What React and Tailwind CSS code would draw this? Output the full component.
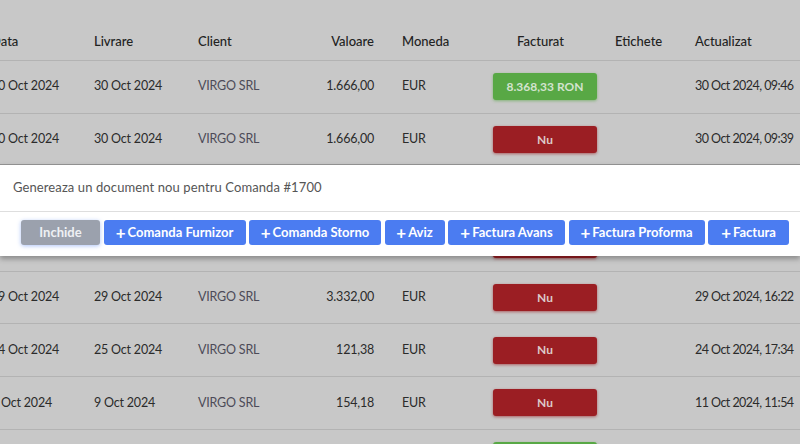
import React from 'react';

const rows = [
  { data: '30 Oct 2024', livrare: '30 Oct 2024', valoare: '1.666,00', facturat: '8.368,33 RON', updated: '30 Oct 2024, 09:46' },
  { data: '30 Oct 2024', livrare: '30 Oct 2024', valoare: '1.666,00', facturat: null, updated: '30 Oct 2024, 09:39' },
  { data: '30 Oct 2024', livrare: '30 Oct 2024', valoare: '1.666,00', facturat: null, updated: '30 Oct 2024, 09:12' },
  { data: '29 Oct 2024', livrare: '29 Oct 2024', valoare: '1.666,00', facturat: null, updated: '29 Oct 2024, 17:05' },
  { data: '29 Oct 2024', livrare: '29 Oct 2024', valoare: '3.332,00', facturat: null, updated: '29 Oct 2024, 16:22' },
  { data: '24 Oct 2024', livrare: '25 Oct 2024', valoare: '121,38', facturat: null, updated: '24 Oct 2024, 17:34' },
  { data: '9 Oct 2024', livrare: '9 Oct 2024', valoare: '154,18', facturat: null, updated: '11 Oct 2024, 11:54' },
  { data: '7 Oct 2024', livrare: '8 Oct 2024', valoare: '98,40', facturat: '482,11 RON', updated: '8 Oct 2024, 10:02' },
];

const actions = [
  { label: 'Comanda Furnizor', w: 'w-[142px]' },
  { label: 'Comanda Storno', w: 'w-[132px]' },
  { label: 'Aviz', w: 'w-[60px]' },
  { label: 'Factura Avans', w: 'w-[117px]' },
  { label: 'Factura Proforma', w: 'w-[136px]' },
  { label: 'Factura', w: 'w-[81px]' },
];

const FacturatBadge = ({ value }) => (
  <div
    className={`w-[104px] h-[27px] ml-[13px] rounded-[3px] flex items-center justify-center text-[12px] font-bold tracking-normal ${
      value
        ? 'bg-[#58a845] text-[#d3e3cf] shadow-[0_1px_3px_rgba(88,168,69,0.6)]'
        : 'bg-[#9b1e23] text-[#dcc9c9] shadow-[0_1px_3px_rgba(155,30,35,0.6)]'
    }`}
  >
    {value || 'Nu'}
  </div>
);

const App = () => {
  return (
    <div
      className="relative w-[800px] h-[444px] overflow-hidden bg-[#c8c8c8] text-[12.5px] tracking-[-0.2px] text-[#2b2b2b]"
      style={{ fontFamily: 'Lato, "Noto Sans", sans-serif' }}
    >
      <div className="ml-[-23px] w-[900px]">
        <div className="flex h-[61px] items-end pb-[9px] border-b border-[#b3b3b3] font-medium text-[#222222] text-[13px] tracking-normal">
          <div className="w-[103px] shrink-0 pl-[14px]">Data</div>
          <div className="w-[104px] shrink-0 pl-[14px]">Livrare</div>
          <div className="w-[116px] shrink-0 pl-[14px]">Client</div>
          <div className="w-[88px] shrink-0 pr-[14px] text-right">Valoare</div>
          <div className="w-[92px] shrink-0 pl-[14px]">Moneda</div>
          <div className="w-[121px] shrink-0 text-center">Facturat</div>
          <div className="w-[80px] shrink-0 pl-[14px]">Etichete</div>
          <div className="flex-1 pl-[14px]">Actualizat</div>
        </div>
        {rows.map((row, i) => (
          <div key={i} className="flex h-[52.7px] items-center border-b border-[#b3b3b3]">
            <div className="w-[103px] shrink-0 pl-[14px] whitespace-nowrap">{row.data}</div>
            <div className="w-[104px] shrink-0 pl-[14px] whitespace-nowrap">{row.livrare}</div>
            <div className="w-[116px] shrink-0 pl-[14px] text-[#4d4b58]">VIRGO SRL</div>
            <div className="w-[88px] shrink-0 pr-[14px] text-right">{row.valoare}</div>
            <div className="w-[92px] shrink-0 pl-[14px]">EUR</div>
            <div className="w-[121px] shrink-0">
              <FacturatBadge value={row.facturat} />
            </div>
            <div className="w-[80px] shrink-0" />
            <div className="flex-1 pl-[14px] whitespace-nowrap tracking-[-0.55px]">{row.updated}</div>
          </div>
        ))}
      </div>

      <div className="absolute left-0 right-0 top-[164px] bg-white border-t border-[#909090] shadow-[0_3px_5px_rgba(0,0,0,0.3)] tracking-normal">
        <div className="h-[47px] flex items-center pl-[13px] border-b border-[#dedede] text-[13px] tracking-[0.1px] text-[#555555]">
          Genereaza un document nou pentru Comanda #1700
        </div>
        <div className="flex justify-end gap-[3.5px] pt-[8px] pb-[11px] pr-[11px]">
          <button className="w-[79px] h-[25px] rounded-[3px] bg-[#9ba1ad] text-[#eef0f4] text-[13px] font-bold shadow-[0_1px_4px_rgba(76,126,242,0.45)]">
            Inchide
          </button>
          {actions.map((a) => (
            <button
              key={a.label}
              className={`${a.w} h-[25px] rounded-[3px] bg-[#4b7cf1] text-white text-[13px] font-bold flex items-center justify-center gap-[2px]`}
            >
              <span className="text-[17px] leading-none font-bold">+</span>
              <span>{a.label}</span>
            </button>
          ))}
        </div>
      </div>
    </div>
  );
};

export default App;
